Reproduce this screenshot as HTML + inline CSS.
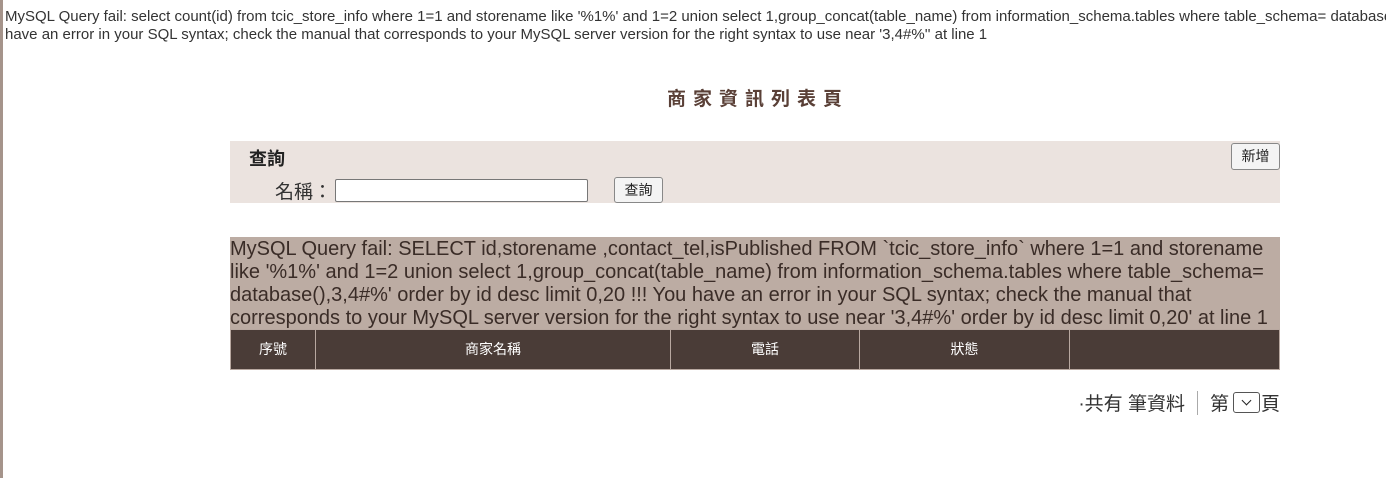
<!DOCTYPE html>
<html><head><meta charset="utf-8">
<style>
*{margin:0;padding:0;box-sizing:border-box}
body{width:1386px;height:478px;background:#fff;position:relative;overflow:hidden;font-family:"Liberation Sans","Noto Sans CJK TC",sans-serif;color:#333}
.lb{position:absolute;left:0;top:0;width:3px;height:478px;background:#a5948b}
.top{position:absolute;left:5px;top:8px;width:1381px;overflow:hidden;font-size:15px;line-height:18px;white-space:nowrap;color:#333}
.title{position:absolute;left:0;width:1386px;top:84px;text-align:center;padding-left:130px;font-size:19px;font-weight:bold;letter-spacing:7px;color:#5a4037}
.q{position:absolute;left:230px;top:141px;width:1050px;height:62px;background:#ebe3df}
.q .h{position:absolute;left:19px;top:4px;font-size:18px;font-weight:bold;color:#222}
.q .l{position:absolute;left:45px;top:36px;font-size:19px;color:#333}
.inp{position:absolute;left:105px;top:38px;width:253px;height:23px;border:1px solid #777;border-radius:2px;background:#fff}
.btn{position:absolute;font-size:14px;border:1px solid #888;border-radius:3px;background:#f4f4f4;color:#222;text-align:center;line-height:25px}
.err{position:absolute;left:230px;top:237px;width:1050px;height:93px;background:#bcaca3;font-size:20px;line-height:23px;color:#3a2c27;padding-top:1px}
table{position:absolute;left:230px;top:329px;width:1050px;border-collapse:collapse;background:#4a3c37}
td{height:40px;border:1px solid #b8a8a0;color:#fff;font-size:14px;text-align:center;padding-bottom:2px}
.pg{position:absolute;right:106px;top:389px;font-size:19px;color:#333;display:flex;align-items:center}
.sel{display:inline-block;width:27px;height:21px;border:1px solid #555;border-radius:3px;margin:0 1px 0 4px;position:relative}
.sel:after{content:"";position:absolute;left:9px;top:4px;width:6px;height:6px;border-right:1.5px solid #222;border-bottom:1.5px solid #222;transform:rotate(45deg)}
</style></head><body>
<div class="lb"></div>
<div class="top">MySQL Query fail: select count(id) from tcic_store_info where 1=1 and storename like '%1%' and 1=2 union select 1,group_concat(table_name) from information_schema.tables where table_schema= database(),3,4#%' !!! You<br>have an error in your SQL syntax; check the manual that corresponds to your MySQL server version for the right syntax to use near '3,4#%'' at line 1</div>
<div class="title">商家資訊列表頁</div>
<div class="q">
<div class="h">查詢</div>
<div class="l">名稱：</div>
<div class="inp"></div>
<div class="btn" style="left:384px;top:36px;width:49px;height:26px">查詢</div>
<div class="btn" style="left:1001px;top:2px;width:49px;height:27px">新增</div>
</div>
<div class="err">MySQL Query fail: SELECT id,storename ,contact_tel,isPublished FROM `tcic_store_info` where 1=1 and storename like '%1%' and 1=2 union select 1,group_concat(table_name) from information_schema.tables where table_schema= database(),3,4#%' order by id desc limit 0,20 !!! You have an error in your SQL syntax; check the manual that corresponds to your MySQL server version for the right syntax to use near '3,4#%' order by id desc limit 0,20' at line 1</div>
<table><tr><td style="width:85px">序號</td><td style="width:355px">商家名稱</td><td style="width:189px">電話</td><td style="width:210px">狀態</td><td></td></tr></table>
<div class="pg">·共有 筆資料<span style="display:inline-block;width:1px;height:24px;background:#aaa;margin:0 12px"></span>第<span class="sel"></span>頁</div>
</body></html>
